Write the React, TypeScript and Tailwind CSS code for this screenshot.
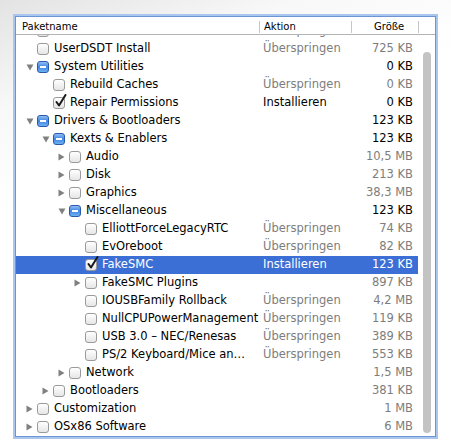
import React from "react";

type Exp = "open" | "closed" | "none";
type Chk = "none" | "mixed" | "checked";
type R = {
  name: string;
  level: number;
  exp: Exp;
  chk: Chk;
  action?: string;
  actDark?: boolean;
  size: string;
  sizeDark?: boolean;
  sel?: boolean;
};

const rows: R[] = [
  { name: "UserDSDT Patch", level: 0, exp: "none", chk: "none", action: "Überspringen", size: "35 KB" },
  { name: "UserDSDT Install", level: 0, exp: "none", chk: "none", action: "Überspringen", size: "725 KB" },
  { name: "System Utilities", level: 0, exp: "open", chk: "mixed", size: "0 KB", sizeDark: true },
  { name: "Rebuild Caches", level: 1, exp: "none", chk: "none", action: "Überspringen", size: "0 KB" },
  { name: "Repair Permissions", level: 1, exp: "none", chk: "checked", action: "Installieren", actDark: true, size: "0 KB", sizeDark: true },
  { name: "Drivers & Bootloaders", level: 0, exp: "open", chk: "mixed", size: "123 KB", sizeDark: true },
  { name: "Kexts & Enablers", level: 1, exp: "open", chk: "mixed", size: "123 KB", sizeDark: true },
  { name: "Audio", level: 2, exp: "closed", chk: "none", size: "10,5 MB" },
  { name: "Disk", level: 2, exp: "closed", chk: "none", size: "213 KB" },
  { name: "Graphics", level: 2, exp: "closed", chk: "none", size: "38,3 MB" },
  { name: "Miscellaneous", level: 2, exp: "open", chk: "mixed", size: "123 KB", sizeDark: true },
  { name: "ElliottForceLegacyRTC", level: 3, exp: "none", chk: "none", action: "Überspringen", size: "74 KB" },
  { name: "EvOreboot", level: 3, exp: "none", chk: "none", action: "Überspringen", size: "82 KB" },
  { name: "FakeSMC", level: 3, exp: "none", chk: "checked", action: "Installieren", actDark: true, size: "123 KB", sizeDark: true, sel: true },
  { name: "FakeSMC Plugins", level: 3, exp: "closed", chk: "none", size: "897 KB" },
  { name: "IOUSBFamily Rollback", level: 3, exp: "none", chk: "none", action: "Überspringen", size: "4,2 MB" },
  { name: "NullCPUPowerManagement", level: 3, exp: "none", chk: "none", action: "Überspringen", size: "119 KB" },
  { name: "USB 3.0 – NEC/Renesas", level: 3, exp: "none", chk: "none", action: "Überspringen", size: "389 KB" },
  { name: "PS/2 Keyboard/Mice an…", level: 3, exp: "none", chk: "none", action: "Überspringen", size: "553 KB" },
  { name: "Network", level: 2, exp: "closed", chk: "none", size: "1,5 MB" },
  { name: "Bootloaders", level: 1, exp: "closed", chk: "none", size: "381 KB" },
  { name: "Customization", level: 0, exp: "closed", chk: "none", size: "1 MB" },
  { name: "OSx86 Software", level: 0, exp: "closed", chk: "none", size: "6 MB" },
];

const pads = ["pl-0", "pl-[16px]", "pl-[32px]", "pl-[48px]"];

function Tri({ exp }: { exp: Exp }) {
  if (exp === "none") return null;
  if (exp === "open")
    return (
      <svg width="8" height="7" viewBox="0 0 8 7">
        <path d="M0.5 0.5 H7.5 L4 6.5 Z" fill="#808080" />
      </svg>
    );
  return (
    <svg width="7" height="8" viewBox="0 0 7 8">
      <path d="M0.5 0.5 V7.5 L6.5 4 Z" fill="#808080" />
    </svg>
  );
}

function Box({ chk }: { chk: Chk }) {
  if (chk === "mixed")
    return (
      <div className="flex h-[12px] w-[12px] shrink-0 items-center justify-center rounded-[3px] border border-[#2b5aa8] bg-gradient-to-b from-[#8cbcf2] via-[#3f86e0] to-[#6fb0f3]">
        <div className="h-[2px] w-[6px] bg-white" />
      </div>
    );
  return (
    <div className="relative h-[12px] w-[12px] shrink-0 rounded-[3px] border border-[#9a9a9a] bg-gradient-to-b from-white to-[#e6e6e6]">
      {chk === "checked" && (
        <svg className="absolute -right-[3px] -top-[4px]" width="13" height="14" viewBox="0 0 13 14">
          <path d="M2.5 8 L5 11.5 L11.5 1" fill="none" stroke="#1a1a1a" strokeWidth="2" strokeLinecap="round" strokeLinejoin="round" />
        </svg>
      )}
    </div>
  );
}

function Row({ r }: { r: R }) {
  const nameCls = r.sel ? "text-white" : "text-black";
  const actCls = r.sel ? "text-white" : r.actDark ? "text-black" : "text-[#7d7d7d]";
  const sizeCls = r.sel ? "text-white" : r.sizeDark ? "text-black" : "text-[#7d7d7d]";
  return (
    <div className={`flex h-[18px] items-center ${r.sel ? "bg-[#3c6fd6]" : ""}`}>
      <div className={`flex h-full w-[243px] shrink-0 items-center overflow-hidden whitespace-nowrap ${pads[r.level]}`}>
        <div className="flex w-[21px] shrink-0 items-center pl-[10px]">
          <Tri exp={r.exp} />
        </div>
        <Box chk={r.chk} />
        <span className={`ml-[5px] ${nameCls}`}>{r.name}</span>
      </div>
      <div className={`w-[92px] shrink-0 whitespace-nowrap pl-[4px] ${actCls}`}>{r.action ?? ""}</div>
      <div className={`w-[67px] shrink-0 whitespace-nowrap pr-[5px] text-right ${sizeCls}`}>{r.size}</div>
    </div>
  );
}

export default function App() {
  return (
    <div
      className="h-[443px] w-[451px] overflow-hidden bg-[linear-gradient(160deg,#e3e3e3_0%,#f8f8f8_18%,#ffffff_35%)] pl-[15px] pt-[16px]"
      style={{ fontFamily: '"DejaVu Sans", Verdana, sans-serif' }}
    >
      <div className="flex h-[421px] w-[421px] flex-col border border-[#6d95d4] bg-white shadow-[0_0_0_2px_#a9c6ee]">
        <div className="flex h-[18px] shrink-0 items-center border-b border-[#b3b3b3] bg-white pt-[2px] text-[10px] leading-none text-black">
          <div className="w-[243px] shrink-0 pl-[6px]">Paketname</div>
          <div className="h-[12px] w-px bg-[#c6c6c6]" />
          <div className="w-[91px] shrink-0 pl-[4px]">Aktion</div>
          <div className="h-[12px] w-px bg-[#c6c6c6]" />
          <div className="w-[66px] shrink-0 pl-[22px]">Größe</div>
          <div className="h-[12px] w-px bg-[#c6c6c6]" />
        </div>
        <div className="flex min-h-0 flex-1">
          <div className="w-[402px] shrink-0 overflow-hidden text-[11.5px] leading-none">
            <div className="-mt-[13px]">
              {rows.map((r, i) => (
                <Row key={i} r={r} />
              ))}
            </div>
          </div>
          <div className="flex flex-1 pb-[3px] pl-[5px] pt-[17px]">
            <div className="w-[8px] rounded-full bg-[#c3c3c3]" />
          </div>
        </div>
      </div>
    </div>
  );
}
